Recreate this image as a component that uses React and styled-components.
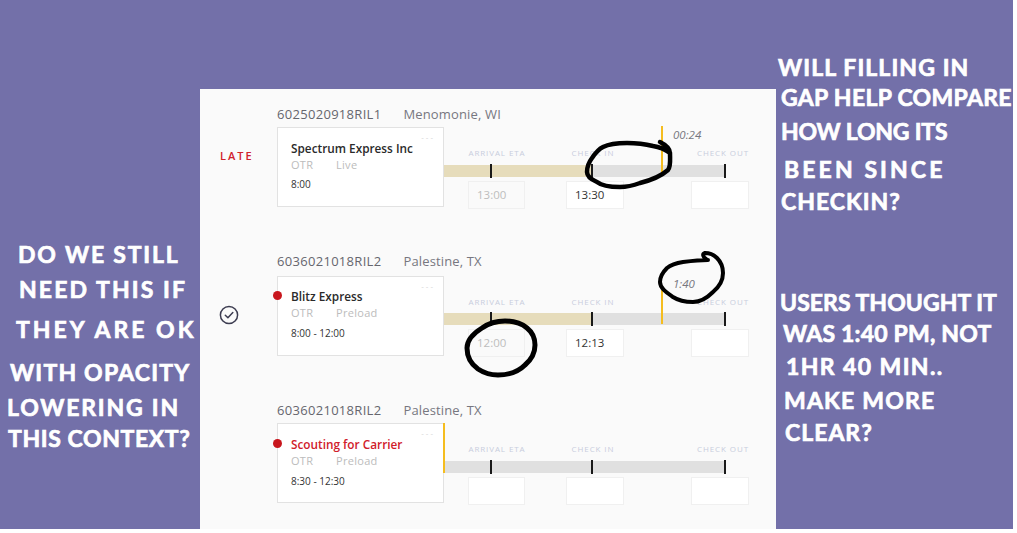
import React from 'react';
import styled, { createGlobalStyle } from 'styled-components';

const GlobalStyle = createGlobalStyle`
  html, body { margin: 0; padding: 0; background: #fff; }
  body { font-family: "Open Sans", "Liberation Sans", sans-serif; }
`;

const leftNote = [
  { text: 'DO WE STILL', left: 18, top: 0, spacing: 1.8 },
  { text: 'NEED THIS IF', left: 19, top: 11, spacing: 2.1 },
  { text: 'THEY ARE OK', left: 16, top: 16, spacing: 3 },
  { text: 'WITH OPACITY', left: 10, top: 19, spacing: 1.2 },
  { text: 'LOWERING IN', left: 7, top: 11, spacing: 1.8 },
  { text: 'THIS CONTEXT?', left: 8, top: 7, spacing: 0.6 }
];

const topNote = [
  { text: 'WILL FILLING IN', left: 2, top: 0, spacing: 1.1 },
  { text: 'GAP HELP COMPARE', left: 5, top: 6, spacing: 0.3 },
  { text: 'HOW LONG ITS', left: 5, top: 10, spacing: -0.2 },
  { text: 'BEEN SINCE', left: 8, top: 14, spacing: 3.1 },
  { text: 'CHECKIN?', left: 5, top: 8, spacing: 1 }
];

const bottomNote = [
  { text: 'USERS THOUGHT IT', left: 4, top: 77, spacing: 0.05 },
  { text: 'WAS 1:40 PM, NOT', left: 7, top: 7, spacing: 0.2 },
  { text: '1HR 40 MIN..', left: 10, top: 9, spacing: 1.4 },
  { text: 'MAKE MORE', left: 8, top: 10, spacing: 1.2 },
  { text: 'CLEAR?', left: 9, top: 8, spacing: 1 }
];

const shipments = [
  {
    id: '6025020918RIL1',
    place: 'Menomonie, WI',
    late: true,
    name: 'Spectrum Express Inc',
    mode: 'Live',
    time: '8:00',
    fill: 148,
    marker: { left: 217, top: -1, height: 50 },
    elapsed: '00:24',
    arrival: '13:00',
    checkIn: '13:30'
  },
  {
    id: '6036021018RIL2',
    place: 'Palestine, TX',
    done: true,
    dot: true,
    name: 'Blitz Express',
    mode: 'Preload',
    time: '8:00 - 12:00',
    fill: 148,
    marker: { left: 217, top: 12, height: 36 },
    elapsed: '1:40',
    arrival: '12:00',
    checkIn: '12:13',
    headGap: 7,
    trackGap: 6,
    cardTop: 11,
    timeGap: 4
  },
  {
    id: '6036021018RIL2',
    place: 'Palestine, TX',
    dot: true,
    alert: true,
    name: 'Scouting for Carrier',
    mode: 'Preload',
    time: '8:30 - 12:30',
    fill: 0,
    marker: { left: -1, top: 0, height: 50 },
    blankArrival: true,
    timeGap: 4
  }
];

const toLineProps = line => ({ $left: line.left, $top: line.top, $spacing: line.spacing });

const App = () => (
  <Stage>
    <GlobalStyle />
    <NoteColumn $top={242}>
      {leftNote.map(line => <NoteLine key={line.text} {...toLineProps(line)}>{line.text}</NoteLine>)}
    </NoteColumn>

    <Panel>
      {shipments.map((s, i) => (
        <Shipment key={i}>
          <Head>
            <LoadId>{s.id}</LoadId>
            <Place>{s.place}</Place>
          </Head>
          <Body $gap={s.headGap}>
            <Status>
              {s.late && <Late>LATE</Late>}
              {s.done && (
                <CheckMark viewBox="0 0 20 20" fill="none" stroke="#3c3c50" strokeWidth="1.5">
                  <circle cx="10" cy="10" r="8.6" />
                  <path d="M6.3 10.2l2.6 2.6 4.9-5.2" strokeLinecap="round" strokeLinejoin="round" />
                </CheckMark>
              )}
            </Status>
            <Card $top={s.cardTop}>
              {s.dot && <RedDot $top={s.alert ? 15 : 14} />}
              <Menu>---</Menu>
              <Carrier $alert={s.alert}>{s.name}</Carrier>
              <Meta>
                <span>OTR</span>
                <span>{s.mode}</span>
              </Meta>
              <Window $gap={s.timeGap}>{s.time}</Window>
            </Card>
            <Timeline>
              <Labels>
                <StepLabel $left={24}>ARRIVAL ETA</StepLabel>
                <StepLabel $left={38}>CHECK IN</StepLabel>
                <StepLabel $left={72}>CHECK OUT</StepLabel>
              </Labels>
              <Track $gap={s.trackGap}>
                <TrackFill style={{ width: s.fill }} />
                <Tick $left={46} />
                <Tick $left={147} />
                <Tick $left={280} />
              </Track>
              <Fields>
                <Field $width={57} $muted={!s.blankArrival}>{s.arrival}</Field>
                <Field $width={58} $left={41}>{s.checkIn}</Field>
                <Field $width={58} $left={67} />
              </Fields>
              <Marker style={{ left: s.marker.left, top: s.marker.top, height: s.marker.height }} />
              {s.elapsed && <Elapsed>{s.elapsed}</Elapsed>}
            </Timeline>
          </Body>
        </Shipment>
      ))}
    </Panel>

    <NoteColumn $top={55}>
      {topNote.map(line => <NoteLine key={line.text} {...toLineProps(line)}>{line.text}</NoteLine>)}
      {bottomNote.map(line => <NoteLine key={line.text} {...toLineProps(line)}>{line.text}</NoteLine>)}
    </NoteColumn>

    <Ink viewBox="0 0 1013 529" fill="none" stroke="#000" strokeLinecap="round" strokeLinejoin="round">
      <path strokeWidth="4.5" d="M660 142C666 145 670 148 670 153C670 160 671 166 668 170C660 177 648 181 640 183C632 186 626 187 620 187C610 187 602 186 597 182C590 179 587 176 587 172C587 166 589 162 592 158C596 152 599 149 603 147C611 143 619 143 627 143C636 143 645 144 653 146C660 147 666 150 670 153" />
      <path strokeWidth="4" d="M706 259C703 257 702 254 705 253C710 253 714 255 717 258C721 262 723 267 723 273C723 280 719 287 713 292C707 298 700 302 693 302C686 302 679 301 673 297C666 292 660 288 660 282C660 276 663 272 667 268C672 264 677 263 683 262C691 261 700 260 708 260" />
      <path strokeWidth="5" d="M505 321C497 321 489 323 482 328C474 333 467 340 467 348C467 357 471 364 478 369C484 373 491 375 498 375C508 375 518 372 525 365C532 359 535 352 535 345C535 338 532 332 527 328C521 323 513 321 505 321" />
    </Ink>
  </Stage>
);

export default App;

const Stage = styled.div`
  position: relative;
  display: grid;
  grid-template-columns: 200px 576px 237px;
  width: 1013px;
  height: 529px;
  overflow: hidden;
  background: #7370a9;
`;

const NoteColumn = styled.div`
  display: flex;
  flex-direction: column;
  align-items: flex-start;
  padding-top: ${p => p.$top}px;
`;

const NoteLine = styled.div`
  margin: ${p => p.$top}px 0 0 ${p => p.$left}px;
  height: 24px;
  font-family: "Lato", "Liberation Sans", sans-serif;
  font-size: 23px;
  font-weight: 700;
  line-height: 24px;
  letter-spacing: ${p => p.$spacing}px;
  white-space: nowrap;
  color: #fff;
  -webkit-text-stroke: 0.7px #fff;
`;

const Panel = styled.div`
  margin-top: 89px;
  padding-top: 17px;
  background: #fafafa;
  display: flex;
  flex-direction: column;
  gap: 45px;
`;

const Shipment = styled.section`
  display: flex;
  flex-direction: column;
`;

const Head = styled.div`
  display: flex;
  gap: 22px;
  height: 16px;
  margin-left: 77px;
  font-size: 13px;
  line-height: 16px;
`;

const LoadId = styled.span`
  color: #66666e;
  font-weight: 500;
  letter-spacing: 0.3px;
`;

const Place = styled.span`
  color: #77777f;
  letter-spacing: 0.15px;
`;

const Body = styled.div`
  display: flex;
  height: 81px;
  margin-top: ${p => p.$gap || 5}px;
`;

const Status = styled.div`
  display: flex;
  align-items: center;
  width: 77px;
  padding-left: 20px;
  box-sizing: border-box;
`;

const Late = styled.span`
  margin-top: -24px;
  font-size: 11px;
  font-weight: 600;
  letter-spacing: 2px;
  color: #d0202a;
`;

const CheckMark = styled.svg`
  width: 20px;
  height: 20px;
  margin: -4px 0 0 -1px;
`;

const Card = styled.div`
  position: relative;
  width: 167px;
  height: 80px;
  box-sizing: border-box;
  padding: ${p => p.$top || 12}px 0 0 13px;
  background: #fff;
  border: 1px solid #e2e2e2;
`;

const RedDot = styled.span`
  position: absolute;
  left: -5px;
  top: ${p => p.$top}px;
  width: 9px;
  height: 9px;
  border-radius: 50%;
  background: #c8161d;
`;

const Menu = styled.span`
  position: absolute;
  top: 4px;
  right: 8px;
  font-size: 8px;
  line-height: 10px;
  letter-spacing: 2px;
  color: #d4d4d4;
`;

const Carrier = styled.div`
  height: 16px;
  font-size: 11.8px;
  font-weight: 600;
  line-height: 16px;
  color: ${p => (p.$alert ? '#d0202a' : '#2a2a2a')};
`;

const Meta = styled.div`
  display: flex;
  margin-top: 1px;
  height: 16px;
  font-size: 11px;
  line-height: 16px;
  letter-spacing: 0.3px;
  color: #bcbcbc;

  span:first-child {
    width: 45px;
  }
`;

const Window = styled.div`
  margin-top: ${p => p.$gap || 3}px;
  font-size: 10px;
  line-height: 16px;
  color: #333;
`;

const Timeline = styled.div`
  position: relative;
  flex: 1;
  padding-top: 20px;
`;

const Labels = styled.div`
  display: flex;
  height: 11px;
`;

const StepLabel = styled.span`
  flex: none;
  display: flex;
  justify-content: center;
  width: 58px;
  margin-left: ${p => p.$left}px;
  font-size: 8px;
  line-height: 11px;
  letter-spacing: 0.9px;
  white-space: nowrap;
  color: #c8cddd;
`;

const Track = styled.div`
  position: relative;
  width: 281px;
  height: 11.5px;
  margin-top: ${p => p.$gap || 7}px;
  background: #e0e0e0;
`;

const TrackFill = styled.div`
  height: 100%;
  background: #e6dcbb;
`;

const Tick = styled.span`
  position: absolute;
  top: -1px;
  left: ${p => p.$left}px;
  width: 2px;
  height: 14px;
  background: #1a1a1a;
`;

const Fields = styled.div`
  display: flex;
  margin-top: 4px;
  padding-left: 24px;
`;

const Field = styled.div`
  flex: none;
  width: ${p => p.$width}px;
  height: 28px;
  margin-left: ${p => p.$left || 0}px;
  box-sizing: border-box;
  padding-left: 8px;
  border: 1px solid #f0f0f0;
  background: ${p => (p.$muted ? 'transparent' : '#fff')};
  font-size: 11.5px;
  line-height: 26px;
  color: ${p => (p.$muted ? '#bdbdbd' : '#333')};
`;

const Marker = styled.span`
  position: absolute;
  width: 2px;
  background: #f5bd1f;
`;

const Elapsed = styled.span`
  position: absolute;
  top: 0;
  left: 229px;
  font-size: 11.5px;
  font-style: italic;
  line-height: 16px;
  color: #77777f;
`;

const Ink = styled.svg`
  position: absolute;
  inset: 0;
  width: 1013px;
  height: 529px;
  pointer-events: none;
`;
